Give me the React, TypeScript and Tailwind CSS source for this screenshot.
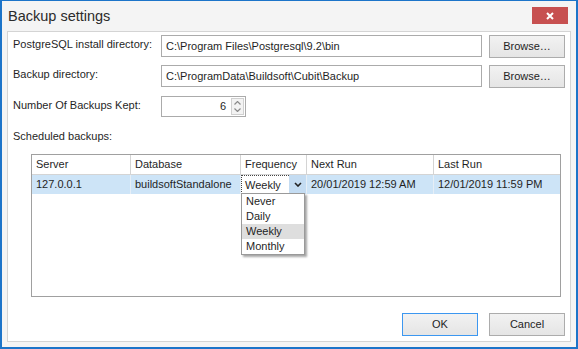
import React from 'react'

const font = "font-['Liberation_Sans',Arial,sans-serif]"

function Button({ label, primary }: { label: string; primary?: boolean }) {
  return (
    <div
      className={`flex h-[23px] w-[76px] items-center justify-center border bg-gradient-to-b from-[#f2f2f2] to-[#e5e5e5] text-[11px] text-[#1f1f1f] ${
        primary ? 'border-[#3c97f0]' : 'border-[#acacac]'
      }`}
    >
      {label}
    </div>
  )
}

function PathRow({ label, value, className }: { label: string; value: string; className?: string }) {
  return (
    <div className={`flex h-[22px] items-center ${className ?? ''}`}>
      <div className="w-[148px] pb-[3px] text-[11px] text-[#1f1f1f]">{label}</div>
      <div className="flex h-[22px] w-[321px] items-center border border-[#ababab] bg-white pl-[4px] text-[11px] text-[#1f1f1f]">
        {value}
      </div>
      <div className="ml-[7px]">
        <Button label="Browse…" />
      </div>
    </div>
  )
}

function Chevron({ up, className }: { up?: boolean; className?: string }) {
  return (
    <svg width="7" height="4" viewBox="0 0 7 4" className={className}>
      <polyline
        points={up ? '0.5,3.5 3.5,0.5 6.5,3.5' : '0.5,0.5 3.5,3.5 6.5,0.5'}
        fill="none"
        stroke="currentColor"
        strokeWidth="1.2"
      />
    </svg>
  )
}

const cols = [
  { title: 'Server', w: 'w-[99px]' },
  { title: 'Database', w: 'w-[110px]' },
  { title: 'Frequency', w: 'w-[66px]' },
  { title: 'Next Run', w: 'w-[127px]' },
  { title: 'Last Run', w: 'flex-1' },
]

export default function App() {
  return (
    <div
      className={`${font} flex h-[349px] w-[578px] flex-col border-2 border-t border-[#1c74c9] bg-[#f4f4f4]`}
    >
      {/* title bar */}
      <div className="flex h-[30px] shrink-0 items-start justify-between">
        <div className="mt-[5px] pl-[6px] text-[14.5px] text-[#2b2b2b]">Backup settings</div>
        <div className="mr-[8px] mt-[6px] flex h-[17px] w-[36px] items-center justify-center bg-[#c75050]">
          <svg width="8" height="8" viewBox="0 0 8 8">
            <path d="M1 1 L7 7 M7 1 L1 7" stroke="white" strokeWidth="2" />
          </svg>
        </div>
      </div>

      {/* content panel */}
      <div className="mx-[5px] mb-[5px] flex flex-1 flex-col border border-[#d4d4d4] bg-white pl-[5px] pr-[5px] pt-[3px]">
        <PathRow label="PostgreSQL install directory:" value="C:\Program Files\Postgresql\9.2\bin" />
        <PathRow
          label="Backup directory:"
          value="C:\ProgramData\Buildsoft\Cubit\Backup"
          className="mt-[8px]"
        />

        <div className="mt-[9px] flex h-[21px] items-center">
          <div className="w-[148px] pb-[3px] text-[11px] text-[#1f1f1f]">Number Of Backups Kept:</div>
          <div className="flex h-[21px] w-[85px] border border-[#ababab] bg-white">
            <div className="flex flex-1 items-center justify-end pr-[5px] text-[11px] text-[#1f1f1f]">6</div>
            <div className="my-[1px] mr-[1px] flex w-[13px] flex-col border border-[#d0d0d0] bg-[#f3f3f3] text-[#8a8a8a]">
              <div className="flex flex-1 items-center justify-center">
                <Chevron up />
              </div>
              <div className="flex flex-1 items-center justify-center">
                <Chevron />
              </div>
            </div>
          </div>
        </div>

        <div className="mt-[12px] h-[14px] text-[11px] leading-[14px] text-[#1f1f1f]">Scheduled backups:</div>

        {/* grid */}
        <div className="relative ml-[18px] mr-[4px] mt-[11px] h-[143px] border border-[#a0a0a0] bg-white text-[11px] text-[#1f1f1f]">
          <div className="flex h-[20px] border-b border-[#d4d4d4]">
            {cols.map((c, i) => (
              <div
                key={c.title}
                className={`${c.w} flex items-center pl-[4px] ${i < cols.length - 1 ? 'border-r border-[#d4d4d4]' : ''}`}
              >
                {c.title}
              </div>
            ))}
          </div>
          <div className="flex h-[19px] bg-[#cde4f7]">
            <div className="flex w-[99px] items-center border-r border-[#e6eef6] pl-[4px]">127.0.0.1</div>
            <div className="flex w-[110px] items-center border-r border-[#e6eef6] pl-[4px]">buildsoftStandalone</div>
            <div className="flex w-[66px] border-r border-[#e6eef6]">
              <div className="flex w-[48px] items-center border-l border-t border-dotted border-[#444] bg-white pl-[3px]">
                Weekly
              </div>
              <div className="flex flex-1 items-center justify-center bg-[#c4dcf2] text-[#222]">
                <svg width="8" height="5" viewBox="0 0 8 5">
                  <polyline points="1,1 4,4 7,1" fill="none" stroke="currentColor" strokeWidth="1.6" />
                </svg>
              </div>
            </div>
            <div className="flex w-[127px] items-center border-r border-[#e6eef6] pl-[4px]">20/01/2019 12:59 AM</div>
            <div className="flex flex-1 items-center pl-[4px]">12/01/2019 11:59 PM</div>
          </div>

          {/* open dropdown */}
          <div className="absolute left-[209px] top-[38px] w-[64px] border border-[#9a9a9a] bg-white shadow-[2px_2px_2px_rgba(0,0,0,0.35)]">
            {['Never', 'Daily', 'Weekly', 'Monthly'].map((o) => (
              <div
                key={o}
                className={`flex h-[15px] items-center pl-[4px] ${o === 'Weekly' ? 'bg-[#dedede]' : ''}`}
              >
                {o}
              </div>
            ))}
          </div>
        </div>

        <div className="mt-[16px] flex justify-end gap-[11px]">
          <Button label="OK" primary />
          <Button label="Cancel" />
        </div>
      </div>
    </div>
  )
}
